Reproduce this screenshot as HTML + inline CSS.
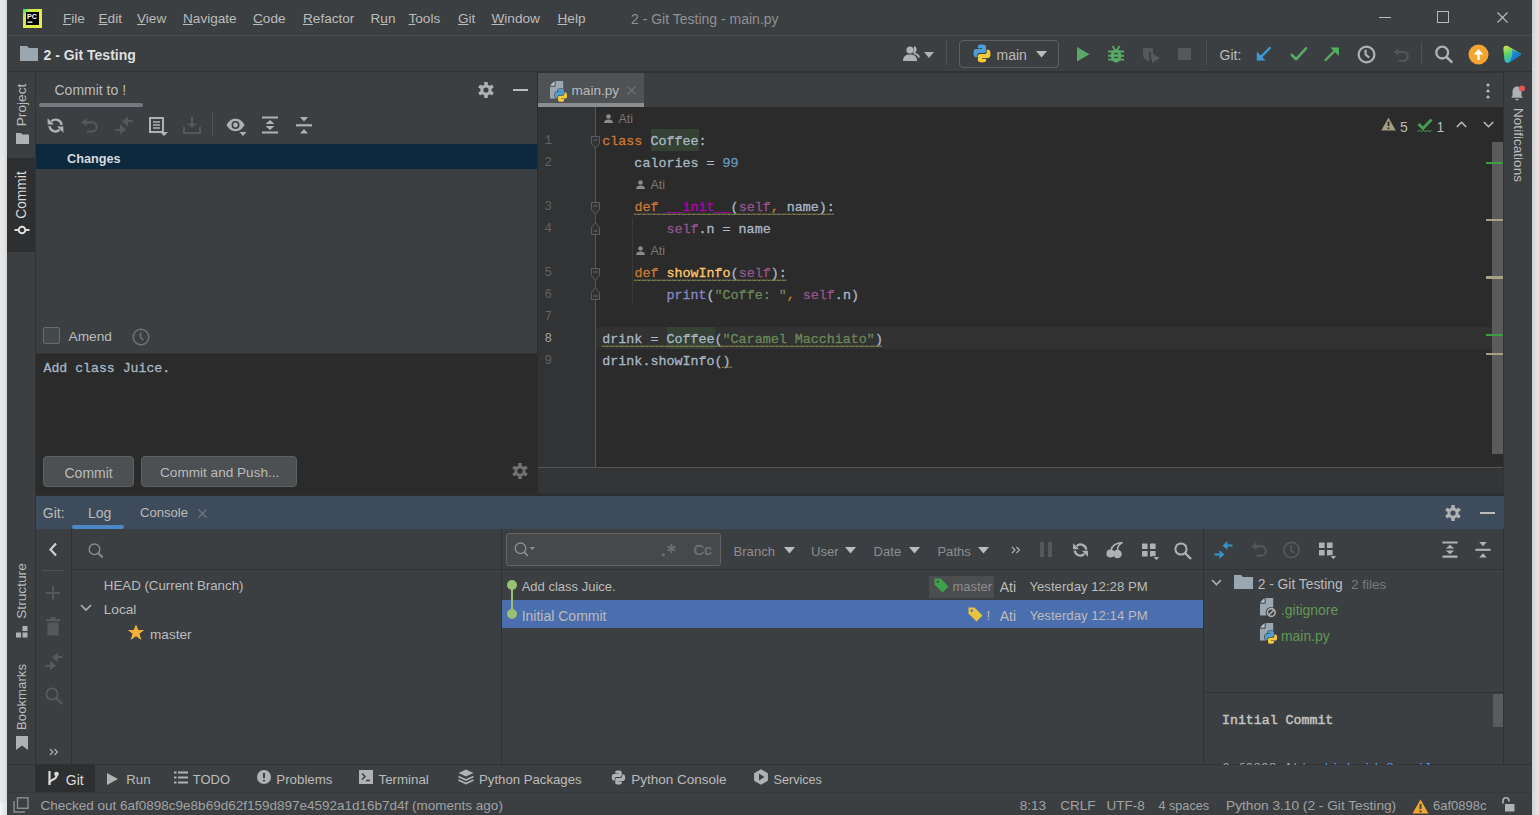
<!DOCTYPE html>
<html><head><meta charset="utf-8">
<style>
*{margin:0;padding:0;box-sizing:border-box}
html,body{width:1539px;height:815px;overflow:hidden;background:#e6e6e6;font-family:"Liberation Sans",sans-serif;font-size:13px;color:#bbbbbb}
.a{position:absolute}
.t{position:absolute;white-space:nowrap;line-height:16px}
.m{font-family:"Liberation Mono",monospace}
#code{-webkit-text-stroke:0.3px currentColor}
svg{position:absolute;overflow:visible}
</style></head><body>
<!-- light edges -->
<div class="a" style="left:0;top:0;width:7px;height:815px;background:linear-gradient(90deg,#e9e9e9 0%,#e3e3e3 70%,#d2d2d2 100%)"></div>
<div class="a" style="left:0;top:803px;width:7px;height:12px;background:linear-gradient(90deg,#f4f4f4,#e0e0e0)"></div>
<div class="a" style="left:1532px;top:0;width:7px;height:815px;background:linear-gradient(90deg,#d4d4d4,#e8e8e8)"></div>

<!-- window -->
<div class="a" id="win" style="left:7px;top:0;width:1525px;height:815px;background:#3c3f41"></div>

<!-- title bar -->
<div class="a" style="left:7px;top:35px;width:1525px;height:1px;background:#4a4d4f"></div>
<!-- toolbar bottom -->
<div class="a" style="left:7px;top:71px;width:1525px;height:1px;background:#323232"></div>

<!-- left stripe -->
<div class="a" style="left:35px;top:72px;width:1px;height:692px;background:#323232"></div>
<!-- right stripe -->
<div class="a" style="left:1503px;top:72px;width:1px;height:692px;background:#323232"></div>

<!-- commit panel right border -->
<div class="a" style="left:537px;top:72px;width:1px;height:423px;background:#2b2b2b"></div>

<!-- editor -->
<div class="a" id="editor" style="left:538px;top:107px;width:965px;height:360px;background:#2b2b2b"></div>
<div class="a" style="left:538px;top:107px;width:57px;height:360px;background:#313335"></div>
<div class="a" style="left:595px;top:107px;width:1px;height:360px;background:#555555"></div>
<div class="a" style="left:538px;top:467px;width:965px;height:1px;background:#555555"></div>

<!-- commit message area -->
<div class="a" style="left:36px;top:353px;width:501px;height:140px;background:#2b2b2b;border-top:1px solid #323232"></div>

<!-- git header -->
<div class="a" style="left:538px;top:468px;width:965px;height:27px;background:#333537"></div>
<div class="a" style="left:36px;top:493px;width:1468px;height:3px;background:#2d2e30"></div>
<div class="a" style="left:36px;top:496px;width:1468px;height:33px;background:#3e4b5a"></div>

<!-- bottom stripe and status -->
<div class="a" style="left:7px;top:764px;width:1525px;height:1px;background:#323232"></div>
<div class="a" style="left:7px;top:792px;width:1525px;height:1px;background:#37393b"></div>


<!-- ===== TITLE BAR ===== -->
<svg style="left:23px;top:9px" width="19" height="19" viewBox="0 0 19 19">
 <defs><linearGradient id="pcg" x1="0" y1="0" x2="1" y2="1"><stop offset="0" stop-color="#21d789"/><stop offset="0.22" stop-color="#c9ea4a"/><stop offset="1" stop-color="#f0f04a"/></linearGradient></defs>
 <rect x="0" y="0" width="19" height="19" fill="url(#pcg)"/>
 <rect x="3" y="3" width="13" height="13" fill="#000"/>
 <text x="4" y="10" font-family="Liberation Sans" font-weight="bold" font-size="7" fill="#fff">PC</text>
 <rect x="4.5" y="12.5" width="5" height="1.3" fill="#fff"/>
</svg>
<div class="t" id="menu" style="top:11px;font-size:13.6px;color:#bbbbbb">
 <span class="t" style="left:63px"><u>F</u>ile</span>
 <span class="t" style="left:98.5px"><u>E</u>dit</span>
 <span class="t" style="left:137px"><u>V</u>iew</span>
 <span class="t" style="left:183px"><u>N</u>avigate</span>
 <span class="t" style="left:253px"><u>C</u>ode</span>
 <span class="t" style="left:303px"><u>R</u>efactor</span>
 <span class="t" style="left:370.5px">R<u>u</u>n</span>
 <span class="t" style="left:408.5px"><u>T</u>ools</span>
 <span class="t" style="left:458px"><u>G</u>it</span>
 <span class="t" style="left:491.5px"><u>W</u>indow</span>
 <span class="t" style="left:557.5px"><u>H</u>elp</span>
 <span class="t" style="left:631px;color:#8f9193;font-size:14px">2 - Git Testing - main.py</span>
</div>
<div class="a" style="left:1379px;top:17px;width:12px;height:1px;background:#bbbbbb"></div>
<div class="a" style="left:1437px;top:11px;width:12px;height:12px;border:1px solid #bbbbbb"></div>
<svg style="left:1497px;top:12px" width="11" height="11"><path d="M0.5 0.5L10.5 10.5M10.5 0.5L0.5 10.5" stroke="#bbbbbb" stroke-width="1.1"/></svg>

<!-- ===== MAIN TOOLBAR ===== -->
<svg style="left:20px;top:46px" width="18" height="15" viewBox="0 0 18 15"><path d="M0 0H7L9 2H18V15H0Z" fill="#9aa7b0"/></svg>
<div class="t" style="left:43.5px;top:47px;font-size:14px;font-weight:bold;color:#dcdee0">2 - Git Testing</div>
<!-- users -->
<svg style="left:902px;top:45px" width="20" height="17" viewBox="0 0 20 17">
 <circle cx="8" cy="5" r="3.6" fill="#afb1b3"/><path d="M1 16C1 11 4 9.5 8 9.5C12 9.5 15 11 15 16Z" fill="#afb1b3"/>
 <path d="M12 1.2C13.6 1.2 14.6 2.6 14.6 4.2C14.6 6 13.7 7.4 12.8 7.9C15.6 8.5 18 10 18 12.5L16 12.5C15.5 10.6 13.5 9.5 11.5 9.3Z" fill="#afb1b3"/>
</svg>
<svg style="left:924px;top:52px" width="10" height="6"><path d="M0 0H10L5 6Z" fill="#afb1b3"/></svg>
<div class="a" style="left:946px;top:40px;width:1px;height:25px;background:#515151"></div>
<div class="a" style="left:959px;top:40px;width:100px;height:28px;border:1px solid #5e6060;border-radius:4px"></div>
<svg style="left:973px;top:44px" width="18" height="19" viewBox="0 0 18 19">
 <path d="M8.8 0.5C4.5 0.5 4.9 2.4 4.9 2.4V4.3H9V5H3.2C3.2 5 0.5 4.7 0.5 9.1C0.5 13.5 2.9 13.3 2.9 13.3H4.3V11.3C4.3 11.3 4.2 8.9 6.7 8.9H10.8C10.8 8.9 13.1 8.9 13.1 6.7V2.9C13.1 2.9 13.5 0.5 8.8 0.5Z" fill="#4e9fd6"/>
 <path d="M9.2 18.5C13.5 18.5 13.1 16.6 13.1 16.6V14.7H9V14H14.8C14.8 14 17.5 14.3 17.5 9.9C17.5 5.5 15.1 5.7 15.1 5.7H13.7V7.7C13.7 7.7 13.8 10.1 11.3 10.1H7.2C7.2 10.1 4.9 10.1 4.9 12.3V16.1C4.9 16.1 4.5 18.5 9.2 18.5Z" fill="#f3c93b"/>
</svg>
<div class="t" style="left:996.5px;top:47px;font-size:14px;color:#bbbbbb">main</div>
<svg style="left:1036px;top:51px" width="11" height="7"><path d="M0 0H11L5.5 6.5Z" fill="#bbbbbb"/></svg>
<svg style="left:1077px;top:47px" width="13" height="15"><path d="M0 0L12.5 7.2L0 14.5Z" fill="#59a869"/></svg>
<svg style="left:1107px;top:45px" width="18" height="18" viewBox="0 0 18 18">
 <path d="M5.5 1L7.8 4.5M12.7 1L10.4 4.5" stroke="#59a869" stroke-width="1.8"/>
 <ellipse cx="9.1" cy="10.8" rx="5.3" ry="6.7" fill="#59a869"/>
 <path d="M1.2 6.5H6M12.2 6.5H17M1.2 10.8H6M12.2 10.8H17M1.2 14.6H6M12.2 14.6H17" stroke="#59a869" stroke-width="1.9"/>
 <path d="M7 8.6H11.2M7 12.4H11.2" stroke="#2f5a35" stroke-width="1.5"/>
</svg>
<svg style="left:1142px;top:47px" width="19" height="16" viewBox="0 0 19 16">
 <path d="M1 1H11V8C11 11 8.5 13 6 14C3.5 13 1 11 1 8Z" fill="#56595b"/>
 <path d="M8 5V12" stroke="#3c3f41" stroke-width="2"/>
 <path d="M10 6L18 11L10 16Z" fill="#56595b"/>
</svg>
<div class="a" style="left:1178px;top:48px;width:13px;height:12px;background:#56595b"></div>
<div class="a" style="left:1206px;top:41px;width:1px;height:24px;background:#515151"></div>
<div class="t" style="left:1219.5px;top:47px;font-size:14px;color:#bbbbbb">Git:</div>
<svg style="left:1250px;top:40px" width="30" height="28" viewBox="0 0 30 28"><path d="M19.8 8L10 17.8" stroke="#3d9ad6" stroke-width="2.4" stroke-linecap="round"/><path d="M6.8 11.6V20.4H15.5Z" fill="#3d9ad6"/></svg>
<svg style="left:1280px;top:40px" width="30" height="28" viewBox="0 0 30 28"><path d="M11.8 15L16.2 19.2L26 8.3" stroke="#59a869" stroke-width="2.6" stroke-linecap="round" stroke-linejoin="round" fill="none"/></svg>
<svg style="left:1320px;top:40px" width="30" height="28" viewBox="0 0 30 28"><path d="M5.6 20L14.5 11.1" stroke="#59a869" stroke-width="2.4" stroke-linecap="round"/><path d="M10.4 7.5H18.9V16Z" fill="#4fb25c"/></svg>
<svg style="left:1357px;top:45px" width="19" height="19" viewBox="0 0 19 19"><circle cx="9.5" cy="9.5" r="7.9" stroke="#afb1b3" stroke-width="2.2" fill="none"/><path d="M8.6 4.8V9.6L12.2 12.6" stroke="#afb1b3" stroke-width="2.2" fill="none"/></svg>
<svg style="left:1392.5px;top:47.5px" width="16" height="14" viewBox="0 0 17 15" preserveAspectRatio="none"><path d="M0.3 4.25L5.8 0.3V8.2Z" fill="#54575a"/><path d="M5 4.25H11A4.7 4.7 0 0 1 11 13.65H5.8" stroke="#54575a" stroke-width="2.3" fill="none"/></svg>
<div class="a" style="left:1421px;top:42px;width:1px;height:22px;background:#515151"></div>
<svg style="left:1435px;top:45px" width="19" height="19" viewBox="0 0 19 19"><circle cx="7.2" cy="7.6" r="5.9" stroke="#afb1b3" stroke-width="2.3" fill="none"/><path d="M11.5 12L17.3 17.6" stroke="#afb1b3" stroke-width="2.6"/></svg>
<svg style="left:1468px;top:44px" width="21" height="21" viewBox="0 0 21 21"><circle cx="10.5" cy="10.5" r="10" fill="#f4a52f"/><path d="M10.5 9.5V16" stroke="#fff" stroke-width="2.4"/><path d="M5.8 10.5L10.5 5L15.2 10.5Z" fill="#fff"/></svg>
<svg style="left:1503px;top:45px" width="18" height="19" viewBox="0 0 18 19">
 <defs><linearGradient id="cwm" x1="0" y1="0" x2="0.3" y2="1"><stop offset="0" stop-color="#d6e84a"/><stop offset="0.5" stop-color="#5cd36a"/><stop offset="1" stop-color="#1fb7d6"/></linearGradient>
 <linearGradient id="cwm2" x1="0" y1="0" x2="1" y2="1"><stop offset="0" stop-color="#1e9be0"/><stop offset="1" stop-color="#1560c8"/></linearGradient></defs>
 <path d="M3 0.8C1.2 0.8 0.2 2.3 0.4 4.2L1.4 14.8C1.7 17.6 4.2 18.8 6.4 17.3L16.8 10.6C18 9.8 18 8.6 16.8 7.9L5.2 1.3C4.5 0.9 3.7 0.8 3 0.8Z" fill="url(#cwm)"/>
 <path d="M9 5L16.8 7.9C18 8.6 18 9.8 16.8 10.6L6.4 17.3C8.5 14 9.8 9.5 9 5Z" fill="url(#cwm2)"/>
</svg>


<!-- ===== LEFT STRIPE ===== -->
<div class="a" style="left:7px;top:158px;width:28px;height:94px;background:#2d2f30"></div>
<div class="t" style="left:22px;top:105px;transform:translate(-50%,-50%) rotate(-90deg);font-size:13.7px;color:#bbbbbb">Project</div>
<svg style="left:16px;top:133px" width="13" height="11" viewBox="0 0 13 11"><path d="M0 0H5L6.5 1.5H13V11H0Z" fill="#afb1b3"/></svg>
<div class="t" style="left:22px;top:195px;transform:translate(-50%,-50%) rotate(-90deg);font-size:13.8px;color:#dcdcdc">Commit</div>
<svg style="left:14px;top:224px" width="16" height="12" viewBox="0 0 16 12"><circle cx="8" cy="6" r="3.3" stroke="#dcdcdc" stroke-width="2" fill="none"/><path d="M0.5 6H4.5M11.5 6H15.5" stroke="#dcdcdc" stroke-width="2"/></svg>
<div class="t" style="left:22px;top:591px;transform:translate(-50%,-50%) rotate(-90deg);font-size:13.7px;color:#bbbbbb">Structure</div>
<svg style="left:16px;top:626px" width="12" height="12" viewBox="0 0 12 12"><rect x="6.5" y="0" width="5" height="5" fill="#afb1b3"/><rect x="0" y="6.5" width="5" height="5" fill="#afb1b3"/><rect x="6.5" y="6.5" width="5" height="5" fill="#afb1b3"/></svg>
<div class="t" style="left:22px;top:697px;transform:translate(-50%,-50%) rotate(-90deg);font-size:13.2px;color:#bbbbbb">Bookmarks</div>
<svg style="left:16px;top:736px" width="12" height="14" viewBox="0 0 12 14"><path d="M0 0H12V14L6 9.5L0 14Z" fill="#afb1b3"/></svg>

<!-- ===== COMMIT PANEL ===== -->
<div class="t" style="left:54.5px;top:82px;font-size:14px;color:#bbbbbb">Commit to !</div>
<div class="a" style="left:39px;top:103px;width:104px;height:4px;background:#747a80;border-radius:2px"></div>
<svg style="left:478px;top:82px" width="16" height="16" viewBox="-8 -8 16 16">
 <g fill="#afb1b3"><circle r="5.6"/>
 <rect x="-1.8" y="-8" width="3.6" height="16" rx="0.6"/>
 <rect x="-1.8" y="-8" width="3.6" height="16" rx="0.6" transform="rotate(60)"/>
 <rect x="-1.8" y="-8" width="3.6" height="16" rx="0.6" transform="rotate(120)"/></g>
 <circle r="2.6" fill="#3c3f41"/>
</svg>
<div class="a" style="left:513px;top:89px;width:15px;height:2px;background:#bbbbbb"></div>

<!-- commit toolbar -->
<svg style="left:47px;top:117px" width="17" height="17" viewBox="0 0 17 17">
 <path d="M14.6 8A6 6 0 0 0 4.4 4.4" stroke="#afb1b3" stroke-width="2.4" fill="none"/>
 <path d="M0.6 1.2V7.6H7Z" fill="#afb1b3"/>
 <path d="M2.4 9.2A6 6 0 0 0 12.6 12.6" stroke="#afb1b3" stroke-width="2.4" fill="none"/>
 <path d="M16.4 15.8V9.4H10Z" fill="#afb1b3"/>
</svg>
<svg style="left:81.3px;top:117.7px" width="17" height="15" viewBox="0 0 17 15" preserveAspectRatio="none"><path d="M0.3 4.25L5.8 0.3V8.2Z" fill="#54575a"/><path d="M5 4.25H11A4.7 4.7 0 0 1 11 13.65H5.8" stroke="#54575a" stroke-width="2.3" fill="none"/></svg>
<svg style="left:115px;top:117px" width="18" height="17" viewBox="0 0 18 17">
 <path d="M17.5 4H11" stroke="#56595b" stroke-width="2"/><path d="M7 4.5L13 -0.5V9.5Z" fill="#56595b"/>
 <path d="M0.5 13H7" stroke="#56595b" stroke-width="2"/><path d="M11 12.5L5 7.5V17.5Z" fill="#56595b"/>
</svg>
<svg style="left:149px;top:117px" width="20" height="20" viewBox="0 0 20 20">
 <rect x="1" y="1" width="13" height="14" stroke="#afb1b3" stroke-width="2" fill="none"/>
 <path d="M4 5H11M4 8H11M4 11H11" stroke="#afb1b3" stroke-width="1.6"/>
 <path d="M11 15H19L15 19Z" fill="#afb1b3"/>
</svg>
<svg style="left:183px;top:117px" width="18" height="17" viewBox="0 0 18 17">
 <path d="M9 0V9" stroke="#56595b" stroke-width="2"/><path d="M4.5 6.5H13.5L9 11Z" fill="#56595b"/>
 <path d="M1 10V16H17V10" stroke="#56595b" stroke-width="2" fill="none"/>
</svg>
<div class="a" style="left:212px;top:112px;width:1px;height:24px;background:#515151"></div>
<svg style="left:226px;top:118px" width="21" height="18" viewBox="0 0 21 18">
 <path d="M0.5 7C3 2.5 6 0.8 9.5 0.8C13 0.8 16 2.5 18.5 7C16 11.5 13 13.2 9.5 13.2C6 13.2 3 11.5 0.5 7Z" fill="#afb1b3"/>
 <circle cx="9.5" cy="7" r="4" fill="#3c3f41"/><circle cx="9.5" cy="7" r="2.4" fill="#afb1b3"/>
 <path d="M13.5 14H20.5L17 18Z" fill="#afb1b3"/>
</svg>
<svg style="left:262px;top:116px" width="16" height="19" viewBox="0 0 16 19">
 <path d="M0 1.5H16M0 16.5H16" stroke="#afb1b3" stroke-width="2.2"/>
 <path d="M3.5 8H12.5L8 4Z" fill="#afb1b3"/><path d="M3.5 10H12.5L8 14Z" fill="#afb1b3"/>
</svg>
<svg style="left:296px;top:116px" width="16" height="19" viewBox="0 0 16 19">
 <path d="M0 9.3H16" stroke="#afb1b3" stroke-width="2.2"/>
 <path d="M4 1H12L8 5.5Z" fill="#afb1b3"/><path d="M4 17.5H12L8 13Z" fill="#afb1b3"/>
</svg>

<div class="a" style="left:36px;top:144px;width:501px;height:25px;background:#0d293e"></div>
<div class="t" style="left:67px;top:150.5px;font-size:12.7px;font-weight:bold;color:#d6d9dd">Changes</div>

<div class="a" style="left:43px;top:327px;width:17px;height:17px;border:1px solid #6b6b6b;border-radius:2px;background:#43494a"></div>
<div class="t" style="left:68.5px;top:328.5px;font-size:13.7px;color:#bbbbbb">Amend</div>
<svg style="left:132px;top:328px" width="18" height="18" viewBox="0 0 18 18"><circle cx="9" cy="9" r="7.8" stroke="#6f7173" stroke-width="1.6" fill="none"/><path d="M8.5 4.5V9.5L11.5 12" stroke="#6f7173" stroke-width="1.6" fill="none"/></svg>

<div class="t m" style="left:43.5px;top:361px;font-size:13.2px;color:#a9b7c6;-webkit-text-stroke:0.3px #a9b7c6">Add class Juice.</div>
<div class="a" style="left:43px;top:456px;width:91px;height:31px;background:#4c5052;border:1px solid #5e6060;border-radius:4px"></div>
<div class="t" style="left:64.5px;top:464.5px;font-size:14px;color:#bbbbbb">Commit</div>
<div class="a" style="left:141px;top:456px;width:156px;height:31px;background:#4c5052;border:1px solid #5e6060;border-radius:4px"></div>
<div class="t" style="left:160px;top:464.5px;font-size:13.6px;color:#bbbbbb">Commit and Push...</div>
<svg style="left:512px;top:463px" width="16" height="16" viewBox="-8 -8 16 16">
 <g fill="#6f7173"><circle r="5.6"/>
 <rect x="-1.8" y="-8" width="3.6" height="16" rx="0.6"/>
 <rect x="-1.8" y="-8" width="3.6" height="16" rx="0.6" transform="rotate(60)"/>
 <rect x="-1.8" y="-8" width="3.6" height="16" rx="0.6" transform="rotate(120)"/></g>
 <circle r="2.6" fill="#2b2b2b"/>
</svg>


<!-- ===== EDITOR TABS ===== -->
<div class="a" style="left:538px;top:72px;width:965px;height:1px;background:#323232"></div>
<div class="a" style="left:538px;top:73px;width:106px;height:34px;background:#4e5254"></div>
<div class="a" style="left:538px;top:103px;width:106px;height:4px;background:#8a8e91"></div>
<svg style="left:550px;top:81px" width="20" height="21" viewBox="0 0 20 21"><path d="M5.5 0H13.2V17.5H0V5.5Z" fill="#9aa7b0"/><path d="M0 4.6L4.6 0V4.6Z" fill="#b9c2c8"/><path d="M0 5.2H5.2V0" stroke="#4e5254" stroke-width="0.9" fill="none"/><g transform="translate(4.5,7.5) scale(0.72)"><path d="M8.8 0.5C4.5 0.5 4.9 2.4 4.9 2.4V4.3H9V5H3.2C3.2 5 0.5 4.7 0.5 9.1C0.5 13.5 2.9 13.3 2.9 13.3H4.3V11.3C4.3 11.3 4.2 8.9 6.7 8.9H10.8C10.8 8.9 13.1 8.9 13.1 6.7V2.9C13.1 2.9 13.5 0.5 8.8 0.5Z" fill="#4e5254" stroke="#4e5254" stroke-width="2"/><path d="M9.2 18.5C13.5 18.5 13.1 16.6 13.1 16.6V14.7H9V14H14.8C14.8 14 17.5 14.3 17.5 9.9C17.5 5.5 15.1 5.7 15.1 5.7H13.7V7.7C13.7 7.7 13.8 10.1 11.3 10.1H7.2C7.2 10.1 4.9 10.1 4.9 12.3V16.1C4.9 16.1 4.5 18.5 9.2 18.5Z" fill="#4e5254" stroke="#4e5254" stroke-width="2"/><path d="M8.8 0.5C4.5 0.5 4.9 2.4 4.9 2.4V4.3H9V5H3.2C3.2 5 0.5 4.7 0.5 9.1C0.5 13.5 2.9 13.3 2.9 13.3H4.3V11.3C4.3 11.3 4.2 8.9 6.7 8.9H10.8C10.8 8.9 13.1 8.9 13.1 6.7V2.9C13.1 2.9 13.5 0.5 8.8 0.5Z" fill="#4e9fd6"/><path d="M9.2 18.5C13.5 18.5 13.1 16.6 13.1 16.6V14.7H9V14H14.8C14.8 14 17.5 14.3 17.5 9.9C17.5 5.5 15.1 5.7 15.1 5.7H13.7V7.7C13.7 7.7 13.8 10.1 11.3 10.1H7.2C7.2 10.1 4.9 10.1 4.9 12.3V16.1C4.9 16.1 4.5 18.5 9.2 18.5Z" fill="#f3c93b"/></g></svg>
<div class="t" style="left:571.5px;top:83px;font-size:13.6px;color:#bbbbbb">main.py</div>
<svg style="left:627px;top:86px" width="9" height="9"><path d="M0.5 0.5L8.5 8.5M8.5 0.5L0.5 8.5" stroke="#6e7072" stroke-width="1.2"/></svg>
<svg style="left:1486px;top:83px" width="4" height="16"><circle cx="2" cy="2" r="1.6" fill="#bbbbbb"/><circle cx="2" cy="8" r="1.6" fill="#bbbbbb"/><circle cx="2" cy="14" r="1.6" fill="#bbbbbb"/></svg>

<!-- ===== EDITOR CONTENT ===== -->
<div class="a" style="left:596px;top:327px;width:907px;height:22px;background:#323232"></div>
<div class="a" style="left:650.5px;top:129px;width:48px;height:22px;background:#344134"></div>
<div class="a" style="left:666.5px;top:327px;width:48px;height:22px;background:#344134"></div>
<div class="m" id="lnums" style="position:absolute;left:538px;top:0;width:20px;font-size:12.5px;color:#606366;text-align:right">
 <div class="t" style="left:0;width:14px;top:133.0px;text-align:right">1</div>
 <div class="t" style="left:0;width:14px;top:155.0px;text-align:right">2</div>
 <div class="t" style="left:0;width:14px;top:199.0px;text-align:right">3</div>
 <div class="t" style="left:0;width:14px;top:221.0px;text-align:right">4</div>
 <div class="t" style="left:0;width:14px;top:265.0px;text-align:right">5</div>
 <div class="t" style="left:0;width:14px;top:287.0px;text-align:right">6</div>
 <div class="t" style="left:0;width:14px;top:309.0px;text-align:right">7</div>
 <div class="t" style="left:0;width:14px;top:331.0px;text-align:right;color:#a4a3a3">8</div>
 <div class="t" style="left:0;width:14px;top:353.0px;text-align:right">9</div>
</div>
<!-- author inlays -->
<svg style="left:604px;top:114px" width="9" height="9" viewBox="0 0 9 9"><circle cx="4.5" cy="2.5" r="2.3" fill="#8c8c8c"/><path d="M0 9C0 6.3 2 5.4 4.5 5.4C7 5.4 9 6.3 9 9Z" fill="#8c8c8c"/></svg>
<div class="t" style="left:618.5px;top:111px;font-size:12.5px;color:#787878">Ati</div>
<svg style="left:636px;top:180px" width="9" height="9" viewBox="0 0 9 9"><circle cx="4.5" cy="2.5" r="2.3" fill="#8c8c8c"/><path d="M0 9C0 6.3 2 5.4 4.5 5.4C7 5.4 9 6.3 9 9Z" fill="#8c8c8c"/></svg>
<div class="t" style="left:650.5px;top:177px;font-size:12.5px;color:#787878">Ati</div>
<svg style="left:636px;top:246px" width="9" height="9" viewBox="0 0 9 9"><circle cx="4.5" cy="2.5" r="2.3" fill="#8c8c8c"/><path d="M0 9C0 6.3 2 5.4 4.5 5.4C7 5.4 9 6.3 9 9Z" fill="#8c8c8c"/></svg>
<div class="t" style="left:650.5px;top:243px;font-size:12.5px;color:#787878">Ati</div>

<div id="code" class="m" style="position:absolute;left:602.3px;top:0;white-space:pre;font-size:13.36px;color:#a9b7c6">
 <div class="t" style="white-space:pre;left:0;top:133.5px"><span style="color:#cc7832">class</span> Coffee:</div>
 <div class="t" style="white-space:pre;left:0;top:155.5px">    calories = <span style="color:#6897bb">99</span></div>
 <div class="t" style="white-space:pre;left:0;top:199.5px">    <span style="color:#cc7832">def</span> <span style="color:#b200b2">__init__</span>(<span style="color:#94558d">self</span><span style="color:#cc7832">,</span> name):</div>
 <div class="t" style="white-space:pre;left:0;top:221.5px">        <span style="color:#94558d">self</span>.n = name</div>
 <div class="t" style="white-space:pre;left:0;top:265.5px">    <span style="color:#cc7832">def</span> <span style="color:#ffc66d">showInfo</span>(<span style="color:#94558d">self</span>):</div>
 <div class="t" style="white-space:pre;left:0;top:287.5px">        <span style="color:#8888c6">print</span>(<span style="color:#6a8759">"Coffe: "</span><span style="color:#cc7832">,</span> <span style="color:#94558d">self</span>.n)</div>
 <div class="t" style="white-space:pre;left:0;top:331.5px">drink = Coffee(<span style="color:#6a8759">"Caramel Macchiato"</span>)</div>
 <div class="t" style="white-space:pre;left:0;top:353.5px">drink.showInfo()</div>
</div>


<!-- wavy underlines & folds -->
<svg style="left:634.0px;top:212.5px" width="200" height="3" viewBox="0 0 200 3"><path d="M0 2 L1.2 0.6 L2.5 2 L3.8 0.6 L5.0 2 L6.2 0.6 L7.5 2 L8.8 0.6 L10.0 2 L11.2 0.6 L12.5 2 L13.8 0.6 L15.0 2 L16.2 0.6 L17.5 2 L18.8 0.6 L20.0 2 L21.2 0.6 L22.5 2 L23.8 0.6 L25.0 2 L26.2 0.6 L27.5 2 L28.8 0.6 L30.0 2 L31.2 0.6 L32.5 2 L33.8 0.6 L35.0 2 L36.2 0.6 L37.5 2 L38.8 0.6 L40.0 2 L41.2 0.6 L42.5 2 L43.8 0.6 L45.0 2 L46.2 0.6 L47.5 2 L48.8 0.6 L50.0 2 L51.2 0.6 L52.5 2 L53.8 0.6 L55.0 2 L56.2 0.6 L57.5 2 L58.8 0.6 L60.0 2 L61.2 0.6 L62.5 2 L63.8 0.6 L65.0 2 L66.2 0.6 L67.5 2 L68.8 0.6 L70.0 2 L71.2 0.6 L72.5 2 L73.8 0.6 L75.0 2 L76.2 0.6 L77.5 2 L78.8 0.6 L80.0 2 L81.2 0.6 L82.5 2 L83.8 0.6 L85.0 2 L86.2 0.6 L87.5 2 L88.8 0.6 L90.0 2 L91.2 0.6 L92.5 2 L93.8 0.6 L95.0 2 L96.2 0.6 L97.5 2 L98.8 0.6 L100.0 2 L101.2 0.6 L102.5 2 L103.8 0.6 L105.0 2 L106.2 0.6 L107.5 2 L108.8 0.6 L110.0 2 L111.2 0.6 L112.5 2 L113.8 0.6 L115.0 2 L116.2 0.6 L117.5 2 L118.8 0.6 L120.0 2 L121.2 0.6 L122.5 2 L123.8 0.6 L125.0 2 L126.2 0.6 L127.5 2 L128.8 0.6 L130.0 2 L131.2 0.6 L132.5 2 L133.8 0.6 L135.0 2 L136.2 0.6 L137.5 2 L138.8 0.6 L140.0 2 L141.2 0.6 L142.5 2 L143.8 0.6 L145.0 2 L146.2 0.6 L147.5 2 L148.8 0.6 L150.0 2 L151.2 0.6 L152.5 2 L153.8 0.6 L155.0 2 L156.2 0.6 L157.5 2 L158.8 0.6 L160.0 2 L161.2 0.6 L162.5 2 L163.8 0.6 L165.0 2 L166.2 0.6 L167.5 2 L168.8 0.6 L170.0 2 L171.2 0.6 L172.5 2 L173.8 0.6 L175.0 2 L176.2 0.6 L177.5 2 L178.8 0.6 L180.0 2 L181.2 0.6 L182.5 2 L183.8 0.6 L185.0 2 L186.2 0.6 L187.5 2 L188.8 0.6 L190.0 2 L191.2 0.6 L192.5 2 L193.8 0.6 L195.0 2 L196.2 0.6 L197.5 2 L198.8 0.6 L200.0 2" stroke="#8b8654" stroke-width="1" fill="none"/></svg>
<svg style="left:634.0px;top:278.5px" width="152" height="3" viewBox="0 0 152 3"><path d="M0 2 L1.2 0.6 L2.5 2 L3.8 0.6 L5.0 2 L6.2 0.6 L7.5 2 L8.8 0.6 L10.0 2 L11.2 0.6 L12.5 2 L13.8 0.6 L15.0 2 L16.2 0.6 L17.5 2 L18.8 0.6 L20.0 2 L21.2 0.6 L22.5 2 L23.8 0.6 L25.0 2 L26.2 0.6 L27.5 2 L28.8 0.6 L30.0 2 L31.2 0.6 L32.5 2 L33.8 0.6 L35.0 2 L36.2 0.6 L37.5 2 L38.8 0.6 L40.0 2 L41.2 0.6 L42.5 2 L43.8 0.6 L45.0 2 L46.2 0.6 L47.5 2 L48.8 0.6 L50.0 2 L51.2 0.6 L52.5 2 L53.8 0.6 L55.0 2 L56.2 0.6 L57.5 2 L58.8 0.6 L60.0 2 L61.2 0.6 L62.5 2 L63.8 0.6 L65.0 2 L66.2 0.6 L67.5 2 L68.8 0.6 L70.0 2 L71.2 0.6 L72.5 2 L73.8 0.6 L75.0 2 L76.2 0.6 L77.5 2 L78.8 0.6 L80.0 2 L81.2 0.6 L82.5 2 L83.8 0.6 L85.0 2 L86.2 0.6 L87.5 2 L88.8 0.6 L90.0 2 L91.2 0.6 L92.5 2 L93.8 0.6 L95.0 2 L96.2 0.6 L97.5 2 L98.8 0.6 L100.0 2 L101.2 0.6 L102.5 2 L103.8 0.6 L105.0 2 L106.2 0.6 L107.5 2 L108.8 0.6 L110.0 2 L111.2 0.6 L112.5 2 L113.8 0.6 L115.0 2 L116.2 0.6 L117.5 2 L118.8 0.6 L120.0 2 L121.2 0.6 L122.5 2 L123.8 0.6 L125.0 2 L126.2 0.6 L127.5 2 L128.8 0.6 L130.0 2 L131.2 0.6 L132.5 2 L133.8 0.6 L135.0 2 L136.2 0.6 L137.5 2 L138.8 0.6 L140.0 2 L141.2 0.6 L142.5 2 L143.8 0.6 L145.0 2 L146.2 0.6 L147.5 2 L148.8 0.6 L150.0 2 L151.2 0.6 L152.5 2" stroke="#8b8654" stroke-width="1" fill="none"/></svg>
<svg style="left:602.0px;top:344.5px" width="280" height="3" viewBox="0 0 280 3"><path d="M0 2 L1.2 0.6 L2.5 2 L3.8 0.6 L5.0 2 L6.2 0.6 L7.5 2 L8.8 0.6 L10.0 2 L11.2 0.6 L12.5 2 L13.8 0.6 L15.0 2 L16.2 0.6 L17.5 2 L18.8 0.6 L20.0 2 L21.2 0.6 L22.5 2 L23.8 0.6 L25.0 2 L26.2 0.6 L27.5 2 L28.8 0.6 L30.0 2 L31.2 0.6 L32.5 2 L33.8 0.6 L35.0 2 L36.2 0.6 L37.5 2 L38.8 0.6 L40.0 2 L41.2 0.6 L42.5 2 L43.8 0.6 L45.0 2 L46.2 0.6 L47.5 2 L48.8 0.6 L50.0 2 L51.2 0.6 L52.5 2 L53.8 0.6 L55.0 2 L56.2 0.6 L57.5 2 L58.8 0.6 L60.0 2 L61.2 0.6 L62.5 2 L63.8 0.6 L65.0 2 L66.2 0.6 L67.5 2 L68.8 0.6 L70.0 2 L71.2 0.6 L72.5 2 L73.8 0.6 L75.0 2 L76.2 0.6 L77.5 2 L78.8 0.6 L80.0 2 L81.2 0.6 L82.5 2 L83.8 0.6 L85.0 2 L86.2 0.6 L87.5 2 L88.8 0.6 L90.0 2 L91.2 0.6 L92.5 2 L93.8 0.6 L95.0 2 L96.2 0.6 L97.5 2 L98.8 0.6 L100.0 2 L101.2 0.6 L102.5 2 L103.8 0.6 L105.0 2 L106.2 0.6 L107.5 2 L108.8 0.6 L110.0 2 L111.2 0.6 L112.5 2 L113.8 0.6 L115.0 2 L116.2 0.6 L117.5 2 L118.8 0.6 L120.0 2 L121.2 0.6 L122.5 2 L123.8 0.6 L125.0 2 L126.2 0.6 L127.5 2 L128.8 0.6 L130.0 2 L131.2 0.6 L132.5 2 L133.8 0.6 L135.0 2 L136.2 0.6 L137.5 2 L138.8 0.6 L140.0 2 L141.2 0.6 L142.5 2 L143.8 0.6 L145.0 2 L146.2 0.6 L147.5 2 L148.8 0.6 L150.0 2 L151.2 0.6 L152.5 2 L153.8 0.6 L155.0 2 L156.2 0.6 L157.5 2 L158.8 0.6 L160.0 2 L161.2 0.6 L162.5 2 L163.8 0.6 L165.0 2 L166.2 0.6 L167.5 2 L168.8 0.6 L170.0 2 L171.2 0.6 L172.5 2 L173.8 0.6 L175.0 2 L176.2 0.6 L177.5 2 L178.8 0.6 L180.0 2 L181.2 0.6 L182.5 2 L183.8 0.6 L185.0 2 L186.2 0.6 L187.5 2 L188.8 0.6 L190.0 2 L191.2 0.6 L192.5 2 L193.8 0.6 L195.0 2 L196.2 0.6 L197.5 2 L198.8 0.6 L200.0 2 L201.2 0.6 L202.5 2 L203.8 0.6 L205.0 2 L206.2 0.6 L207.5 2 L208.8 0.6 L210.0 2 L211.2 0.6 L212.5 2 L213.8 0.6 L215.0 2 L216.2 0.6 L217.5 2 L218.8 0.6 L220.0 2 L221.2 0.6 L222.5 2 L223.8 0.6 L225.0 2 L226.2 0.6 L227.5 2 L228.8 0.6 L230.0 2 L231.2 0.6 L232.5 2 L233.8 0.6 L235.0 2 L236.2 0.6 L237.5 2 L238.8 0.6 L240.0 2 L241.2 0.6 L242.5 2 L243.8 0.6 L245.0 2 L246.2 0.6 L247.5 2 L248.8 0.6 L250.0 2 L251.2 0.6 L252.5 2 L253.8 0.6 L255.0 2 L256.2 0.6 L257.5 2 L258.8 0.6 L260.0 2 L261.2 0.6 L262.5 2 L263.8 0.6 L265.0 2 L266.2 0.6 L267.5 2 L268.8 0.6 L270.0 2 L271.2 0.6 L272.5 2 L273.8 0.6 L275.0 2 L276.2 0.6 L277.5 2 L278.8 0.6 L280.0 2" stroke="#8b8654" stroke-width="1" fill="none"/></svg>
<svg style="left:722.0px;top:366.0px" width="9" height="3" viewBox="0 0 9 3"><path d="M0 2 L1.2 0.6 L2.5 2 L3.8 0.6 L5.0 2 L6.2 0.6 L7.5 2 L8.8 0.6 L10.0 2" stroke="#8b8654" stroke-width="1" fill="none"/></svg>
<svg style="left:591px;top:136px" width="9" height="13" viewBox="0 0 9 13"><path d="M0.5 0.5H8.5V7.5L4.5 12.5L0.5 7.5Z" fill="#313335" stroke="#5a5d5f" stroke-width="1"/><path d="M2.5 4H6.5" stroke="#5a5d5f" stroke-width="1.4"/></svg>
<svg style="left:591px;top:202px" width="9" height="13" viewBox="0 0 9 13"><path d="M0.5 0.5H8.5V7.5L4.5 12.5L0.5 7.5Z" fill="#313335" stroke="#5a5d5f" stroke-width="1"/><path d="M2.5 4H6.5" stroke="#5a5d5f" stroke-width="1.4"/></svg>
<svg style="left:591px;top:222px" width="9" height="13" viewBox="0 0 9 13"><path d="M0.5 12.5H8.5V5.5L4.5 0.5L0.5 5.5Z" fill="#313335" stroke="#5a5d5f" stroke-width="1"/><path d="M2.5 9H6.5" stroke="#5a5d5f" stroke-width="1.4"/></svg>
<svg style="left:591px;top:268px" width="9" height="13" viewBox="0 0 9 13"><path d="M0.5 0.5H8.5V7.5L4.5 12.5L0.5 7.5Z" fill="#313335" stroke="#5a5d5f" stroke-width="1"/><path d="M2.5 4H6.5" stroke="#5a5d5f" stroke-width="1.4"/></svg>
<svg style="left:591px;top:287px" width="9" height="13" viewBox="0 0 9 13"><path d="M0.5 12.5H8.5V5.5L4.5 0.5L0.5 5.5Z" fill="#313335" stroke="#5a5d5f" stroke-width="1"/><path d="M2.5 9H6.5" stroke="#5a5d5f" stroke-width="1.4"/></svg>
<div class="a" style="left:632px;top:218px;width:1px;height:87px;background:#393939"></div>


<!-- ===== EDITOR RIGHT INDICATORS ===== -->
<svg style="left:1381px;top:117px" width="15" height="14" viewBox="0 0 15 14"><path d="M7.5 0.5L14.8 13.5H0.2Z" fill="#a39e83"/><path d="M7.5 4.5V9" stroke="#2b2b2b" stroke-width="1.8"/><circle cx="7.5" cy="11.2" r="1" fill="#2b2b2b"/></svg>
<div class="t" style="left:1400px;top:118.5px;font-size:14px;color:#bbbbbb">5</div>
<svg style="left:1417px;top:118px" width="16" height="16" viewBox="0 0 16 16"><path d="M1.5 6L6 10.5L14.5 1.5" stroke="#499c54" stroke-width="2.8" fill="none"/><path d="M0.5 13.5L2.5 12L4.5 14L6.5 12L8.5 14L10.5 12L12.5 14L14.5 12" stroke="#499c54" stroke-width="1" fill="none"/></svg>
<div class="t" style="left:1436.5px;top:118.5px;font-size:14px;color:#bbbbbb">1</div>
<svg style="left:1456px;top:121px" width="11" height="7"><path d="M0.8 6L5.5 1.3L10.2 6" stroke="#bbbbbb" stroke-width="1.6" fill="none"/></svg>
<svg style="left:1483px;top:121px" width="11" height="7"><path d="M0.8 1L5.5 5.7L10.2 1" stroke="#bbbbbb" stroke-width="1.6" fill="none"/></svg>
<div class="a" style="left:1492px;top:142px;width:11px;height:312px;background:#595b5d"></div>
<div class="a" style="left:1486px;top:161.5px;width:17px;height:2.5px;background:#3f9e3f"></div>
<div class="a" style="left:1486px;top:218.5px;width:17px;height:2.5px;background:#a8a283"></div>
<div class="a" style="left:1486px;top:276px;width:17px;height:2.5px;background:#a8a283"></div>
<div class="a" style="left:1486px;top:333.5px;width:17px;height:2.5px;background:#3f9e3f"></div>
<div class="a" style="left:1486px;top:352.5px;width:17px;height:2.5px;background:#a8a283"></div>

<!-- ===== RIGHT STRIPE ===== -->
<svg style="left:1509px;top:84px" width="18" height="18" viewBox="0 0 18 18"><path d="M8 2.5C5 2.5 3.5 5 3.5 8V12L2 13.8H14L12.5 12V8C12.5 5 11 2.5 8 2.5Z" fill="#afb1b3"/><rect x="6.5" y="14.8" width="3" height="1.4" fill="#afb1b3"/><circle cx="13" cy="4.5" r="3" fill="#e05555"/></svg>
<div class="t" style="left:1518px;top:145px;transform:translate(-50%,-50%) rotate(90deg);font-size:13.6px;color:#bbbbbb">Notifications</div>

<!-- ===== GIT HEADER ===== -->
<div class="t" style="left:42.8px;top:505px;font-size:14px;color:#bbbbbb">Git:</div>
<div class="t" style="left:88px;top:505px;font-size:14px;color:#bbbbbb">Log</div>
<div class="a" style="left:72px;top:525px;width:52px;height:4px;background:#4a88c7;border-radius:2px"></div>
<div class="t" style="left:140px;top:505px;font-size:13.1px;color:#bbbbbb">Console</div>
<svg style="left:198px;top:509px" width="9" height="9"><path d="M0.5 0.5L8.5 8.5M8.5 0.5L0.5 8.5" stroke="#6e7780" stroke-width="1.2"/></svg>
<svg style="left:1445px;top:505px" width="16" height="16" viewBox="-8 -8 16 16"><g fill="#afb1b3"><circle r="5.6"/><rect x="-1.8" y="-8" width="3.6" height="16" rx="0.6"/><rect x="-1.8" y="-8" width="3.6" height="16" rx="0.6" transform="rotate(60)"/><rect x="-1.8" y="-8" width="3.6" height="16" rx="0.6" transform="rotate(120)"/></g><circle r="2.6" fill="#3e4b5a"/></svg>
<div class="a" style="left:1480px;top:511.5px;width:15px;height:2.5px;background:#bbbbbb"></div>

<!-- ===== GIT LOG : branches ===== -->
<div class="a" style="left:71px;top:529px;width:1px;height:235px;background:#323232"></div>
<div class="a" style="left:501px;top:529px;width:1px;height:235px;background:#323232"></div>
<div class="a" style="left:1203px;top:529px;width:1px;height:235px;background:#323232"></div>
<div class="a" style="left:72px;top:569px;width:429px;height:1px;background:#323232"></div>
<div class="a" style="left:502px;top:569px;width:701px;height:1px;background:#323232"></div>
<div class="a" style="left:1204px;top:569px;width:300px;height:1px;background:#323232"></div>
<svg style="left:48px;top:542px" width="10" height="15"><path d="M8 1.5L2.5 7.5L8 13.5" stroke="#cfd1d3" stroke-width="2.2" fill="none"/></svg>
<div class="a" style="left:42px;top:570px;width:22px;height:1px;background:#515151"></div>
<svg style="left:46px;top:586px" width="14" height="14"><path d="M7 0V14M0 7H14" stroke="#56595b" stroke-width="1.8"/></svg>
<svg style="left:46px;top:617px" width="14" height="19" viewBox="0 0 14 19"><rect x="0" y="2" width="14" height="2.2" fill="#56595b"/><rect x="4.5" y="0" width="5" height="2" fill="#56595b"/><path d="M1.5 5.5H12.5V18.5H1.5Z" fill="#56595b"/></svg>
<svg style="left:45px;top:653px" width="18" height="17" viewBox="0 0 18 17"><path d="M17.5 4H11" stroke="#56595b" stroke-width="2"/><path d="M7 4.5L13 -0.5V9.5Z" fill="#56595b"/><path d="M0.5 13H7" stroke="#56595b" stroke-width="2"/><path d="M11 12.5L5 7.5V17.5Z" fill="#56595b"/></svg>
<svg style="left:45px;top:687px" width="18" height="18" viewBox="0 0 18 18"><circle cx="7" cy="7" r="5.6" stroke="#56595b" stroke-width="2" fill="none"/><path d="M11 11L17 17" stroke="#56595b" stroke-width="2.4"/></svg>
<svg style="left:49px;top:748px" width="10" height="8" viewBox="0 0 10 8"><path d="M1 1L4 4L1 7M5.5 1L8.5 4L5.5 7" stroke="#afb1b3" stroke-width="1.2" fill="none"/></svg>

<svg style="left:88px;top:543px" width="16" height="15" viewBox="0 0 16 15"><circle cx="6.5" cy="6.3" r="5.3" stroke="#8c8e90" stroke-width="1.4" fill="none"/><path d="M10.2 10.2L14.8 14.5" stroke="#8c8e90" stroke-width="1.8"/></svg>
<div class="t" style="left:103.8px;top:577.5px;font-size:13.3px;color:#bbbbbb">HEAD (Current Branch)</div>
<svg style="left:80px;top:604px" width="12" height="8"><path d="M1 1L6 6L11 1" stroke="#afb1b3" stroke-width="1.6" fill="none"/></svg>
<div class="t" style="left:103.8px;top:602px;font-size:13.6px;color:#bbbbbb">Local</div>
<svg style="left:127px;top:624px" width="18" height="17" viewBox="0 0 18 17"><path d="M9 0.5L11.3 6H17.2L12.5 9.7L14.3 16L9 12.3L3.7 16L5.5 9.7L0.8 6H6.7Z" fill="#f4af3d"/></svg>
<div class="t" style="left:150px;top:627px;font-size:13.6px;color:#bbbbbb">master</div>

<!-- ===== GIT LOG : table ===== -->
<div class="a" style="left:506px;top:533px;width:215px;height:33px;background:#45494a;border:1px solid #646464;border-radius:3px"></div>
<svg style="left:514px;top:542px" width="22" height="16" viewBox="0 0 22 16"><circle cx="6.5" cy="6.3" r="5.3" stroke="#8c8e90" stroke-width="1.3" fill="none"/><path d="M10.2 10.2L14 14" stroke="#8c8e90" stroke-width="1.7"/><path d="M15.5 5H21L18.25 8Z" fill="#8c8e90"/></svg>
<svg style="left:661px;top:543px" width="16" height="14" viewBox="0 0 16 14"><rect x="1" y="10.5" width="2.6" height="2.6" fill="#6e7072"/><path d="M10.5 1V10M6.5 3.2L14.5 7.8M14.5 3.2L6.5 7.8" stroke="#6e7072" stroke-width="1.8"/></svg>
<div class="t" style="left:693.5px;top:542px;font-size:14.8px;color:#6e7072;-webkit-text-stroke:0.5px #6e7072">Cc</div>
<div class="t" style="left:733.5px;top:543.5px;font-size:13.1px;color:#8c8e90">Branch</div>
<svg style="left:784px;top:547px" width="11" height="7"><path d="M0 0H11L5.5 6.5Z" fill="#bbbbbb"/></svg>
<div class="t" style="left:811px;top:543.5px;font-size:13.1px;color:#8c8e90">User</div>
<svg style="left:845px;top:547px" width="11" height="7"><path d="M0 0H11L5.5 6.5Z" fill="#bbbbbb"/></svg>
<div class="t" style="left:873.5px;top:543.5px;font-size:13.1px;color:#8c8e90">Date</div>
<svg style="left:909px;top:547px" width="11" height="7"><path d="M0 0H11L5.5 6.5Z" fill="#bbbbbb"/></svg>
<div class="t" style="left:937.4px;top:543.5px;font-size:13.1px;color:#8c8e90">Paths</div>
<svg style="left:978px;top:547px" width="11" height="7"><path d="M0 0H11L5.5 6.5Z" fill="#bbbbbb"/></svg>
<svg style="left:1011px;top:546px" width="10" height="8" viewBox="0 0 10 8"><path d="M1 1L4 4L1 7M5.5 1L8.5 4L5.5 7" stroke="#afb1b3" stroke-width="1.2" fill="none"/></svg>
<div class="a" style="left:1040px;top:541.5px;width:3.5px;height:15px;background:#56595b"></div>
<div class="a" style="left:1048px;top:541.5px;width:3.5px;height:15px;background:#56595b"></div>
<svg style="left:1072px;top:541.5px" width="17" height="16" viewBox="0 0 17 17">
 <path d="M14.6 8A6 6 0 0 0 4.4 4.4" stroke="#afb1b3" stroke-width="2.4" fill="none"/><path d="M0.6 1.2V7.6H7Z" fill="#afb1b3"/>
 <path d="M2.4 9.2A6 6 0 0 0 12.6 12.6" stroke="#afb1b3" stroke-width="2.4" fill="none"/><path d="M16.4 15.8V9.4H10Z" fill="#afb1b3"/>
</svg>
<svg style="left:1106px;top:541px" width="18" height="18" viewBox="0 0 18 18"><circle cx="4.5" cy="12.5" r="4" fill="#afb1b3"/><circle cx="11.5" cy="13" r="4.3" fill="#afb1b3"/><path d="M5 9C6 5 9 2 16.5 1.5M11.5 9C11.5 6 13 3 16.5 1.5" stroke="#afb1b3" stroke-width="1.5" fill="none"/></svg>
<svg style="left:1142px;top:543px" width="18" height="18" viewBox="0 0 18 18"><rect x="0" y="0.5" width="5.6" height="5.6" rx="0.6" fill="#afb1b3"/><rect x="8" y="0.5" width="5.6" height="5.6" rx="0.6" fill="#afb1b3"/><rect x="0" y="8" width="5.6" height="5.6" rx="0.6" fill="#afb1b3"/><rect x="8" y="8" width="5.6" height="5.6" rx="0.6" fill="#afb1b3"/><path d="M10.5 13.6H18.2L14.35 17.6Z" fill="#afb1b3" stroke="#3c3f41" stroke-width="1"/></svg>
<svg style="left:1174px;top:542px" width="18" height="18" viewBox="0 0 18 18"><circle cx="7" cy="7" r="5.6" stroke="#afb1b3" stroke-width="2" fill="none"/><path d="M11 11L17 17" stroke="#afb1b3" stroke-width="2.4"/></svg>

<div class="a" style="left:502px;top:600px;width:701px;height:28px;background:#4b6eaf"></div>
<div class="a" style="left:510.5px;top:585px;width:2.6px;height:29px;background:#98bf73"></div>
<div class="a" style="left:507px;top:579.5px;width:10px;height:10px;border-radius:50%;background:#98bf73"></div>
<div class="a" style="left:507px;top:608.5px;width:10px;height:10px;border-radius:50%;background:#98bf73"></div>
<div class="t" style="left:521.7px;top:578.5px;font-size:13px;color:#bbbbbb">Add class Juice.</div>
<div class="t" style="left:521.7px;top:607.5px;font-size:14px;color:#bbbbbb">Initial Commit</div>
<div class="a" style="left:929px;top:575.5px;width:65px;height:22px;background:#4b4d4f"></div>
<svg style="left:934px;top:578px" width="15" height="15" viewBox="0 0 15 15"><path d="M0.5 2.5V0.5H6.5L14.5 8.5L8.5 14.5L0.5 6.5Z" fill="#3fa14a"/><circle cx="3.8" cy="3.8" r="1.2" fill="#4b4d4f"/></svg>
<div class="t" style="left:952.4px;top:578.5px;font-size:13px;color:#8c8e90">master</div>
<svg style="left:968px;top:607px" width="15" height="15" viewBox="0 0 15 15"><path d="M0.5 2.5V0.5H6.5L14.5 8.5L8.5 14.5L0.5 6.5Z" fill="#e8c340"/><circle cx="3.8" cy="3.8" r="1.2" fill="#4b6eaf"/></svg>
<div class="t" style="left:986.5px;top:607.5px;font-size:13px;color:#bbbbbb">!</div>
<div class="t" style="left:999.7px;top:578.5px;font-size:14px;color:#bbbbbb">Ati</div>
<div class="t" style="left:1029.4px;top:578.5px;font-size:13.2px;color:#bbbbbb">Yesterday 12:28 PM</div>
<div class="t" style="left:999.7px;top:607.5px;font-size:14px;color:#bbbbbb">Ati</div>
<div class="t" style="left:1029.4px;top:607.5px;font-size:13.2px;color:#bbbbbb">Yesterday 12:14 PM</div>

<!-- ===== GIT LOG : right panel ===== -->
<svg style="left:1214px;top:541px" width="19" height="18" viewBox="0 0 19 18"><path d="M18.5 4.5H12" stroke="#3592c4" stroke-width="2.2"/><path d="M8.5 4.5L13.5 0V9Z" fill="#3592c4"/><path d="M0.5 13.5H7" stroke="#3592c4" stroke-width="2.2"/><path d="M10.5 13.5L5.5 9V18Z" fill="#3592c4"/></svg>
<svg style="left:1250.5px;top:542px" width="16" height="15" viewBox="0 0 17 15" preserveAspectRatio="none"><path d="M0.3 4.25L5.8 0.3V8.2Z" fill="#54575a"/><path d="M5 4.25H11A4.7 4.7 0 0 1 11 13.65H5.8" stroke="#54575a" stroke-width="2.3" fill="none"/></svg>
<svg style="left:1282px;top:541px" width="19" height="18" viewBox="0 0 19 19"><circle cx="9.5" cy="9.5" r="8" stroke="#56595b" stroke-width="1.8" fill="none"/><path d="M9 4.5V10L12.5 12.5" stroke="#56595b" stroke-width="1.8" fill="none"/></svg>
<svg style="left:1319px;top:542px" width="18" height="18" viewBox="0 0 18 18"><rect x="0" y="0.5" width="5.6" height="5.6" rx="0.6" fill="#afb1b3"/><rect x="8" y="0.5" width="5.6" height="5.6" rx="0.6" fill="#afb1b3"/><rect x="0" y="8" width="5.6" height="5.6" rx="0.6" fill="#afb1b3"/><rect x="8" y="8" width="5.6" height="5.6" rx="0.6" fill="#afb1b3"/><path d="M10.5 13.6H18.2L14.35 17.6Z" fill="#afb1b3" stroke="#3c3f41" stroke-width="1"/></svg>
<svg style="left:1442px;top:541px" width="16" height="18" viewBox="0 0 16 19"><path d="M0 1.5H16M0 16.5H16" stroke="#afb1b3" stroke-width="2.2"/><path d="M3.5 8H12.5L8 4Z" fill="#afb1b3"/><path d="M3.5 10H12.5L8 14Z" fill="#afb1b3"/></svg>
<svg style="left:1475px;top:541px" width="16" height="18" viewBox="0 0 16 19"><path d="M0 9.3H16" stroke="#afb1b3" stroke-width="2.2"/><path d="M4 1H12L8 5.5Z" fill="#afb1b3"/><path d="M4 17.5H12L8 13Z" fill="#afb1b3"/></svg>

<svg style="left:1211px;top:579px" width="11" height="7"><path d="M1 1L5.5 5.5L10 1" stroke="#afb1b3" stroke-width="1.6" fill="none"/></svg>
<svg style="left:1234px;top:575px" width="19" height="14" viewBox="0 0 19 14"><path d="M0 0H7L9 2H19V14H0Z" fill="#9aa7b0"/></svg>
<div class="t" style="left:1257.7px;top:577px;font-size:13.8px;color:#bbbbbb">2 - Git Testing</div>
<div class="t" style="left:1350.9px;top:577px;font-size:13.5px;color:#787878">2 files</div>
<svg style="left:1260px;top:598px" width="20" height="21" viewBox="0 0 20 21"><path d="M5.5 0H13.2V17.5H0V5.5Z" fill="#9aa7b0"/><path d="M0 4.6L4.6 0V4.6Z" fill="#b9c2c8"/><path d="M0 5.2H5.2V0" stroke="#3c3f41" stroke-width="0.9" fill="none"/><circle cx="11.3" cy="14.5" r="5.6" fill="#3c3f41"/><circle cx="11.3" cy="14.5" r="3.9" stroke="#afb1b3" stroke-width="1.6" fill="none"/><path d="M8.8 17L13.8 12" stroke="#afb1b3" stroke-width="1.6"/></svg>
<div class="t" style="left:1281px;top:602px;font-size:13.9px;color:#629755">.gitignore</div>
<svg style="left:1260px;top:623px" width="20" height="21" viewBox="0 0 20 21"><path d="M5.5 0H13.2V17.5H0V5.5Z" fill="#9aa7b0"/><path d="M0 4.6L4.6 0V4.6Z" fill="#b9c2c8"/><path d="M0 5.2H5.2V0" stroke="#3c3f41" stroke-width="0.9" fill="none"/><g transform="translate(4.5,7.5) scale(0.72)"><path d="M8.8 0.5C4.5 0.5 4.9 2.4 4.9 2.4V4.3H9V5H3.2C3.2 5 0.5 4.7 0.5 9.1C0.5 13.5 2.9 13.3 2.9 13.3H4.3V11.3C4.3 11.3 4.2 8.9 6.7 8.9H10.8C10.8 8.9 13.1 8.9 13.1 6.7V2.9C13.1 2.9 13.5 0.5 8.8 0.5Z" fill="#3c3f41" stroke="#3c3f41" stroke-width="2"/><path d="M9.2 18.5C13.5 18.5 13.1 16.6 13.1 16.6V14.7H9V14H14.8C14.8 14 17.5 14.3 17.5 9.9C17.5 5.5 15.1 5.7 15.1 5.7H13.7V7.7C13.7 7.7 13.8 10.1 11.3 10.1H7.2C7.2 10.1 4.9 10.1 4.9 12.3V16.1C4.9 16.1 4.5 18.5 9.2 18.5Z" fill="#3c3f41" stroke="#3c3f41" stroke-width="2"/><path d="M8.8 0.5C4.5 0.5 4.9 2.4 4.9 2.4V4.3H9V5H3.2C3.2 5 0.5 4.7 0.5 9.1C0.5 13.5 2.9 13.3 2.9 13.3H4.3V11.3C4.3 11.3 4.2 8.9 6.7 8.9H10.8C10.8 8.9 13.1 8.9 13.1 6.7V2.9C13.1 2.9 13.5 0.5 8.8 0.5Z" fill="#4e9fd6"/><path d="M9.2 18.5C13.5 18.5 13.1 16.6 13.1 16.6V14.7H9V14H14.8C14.8 14 17.5 14.3 17.5 9.9C17.5 5.5 15.1 5.7 15.1 5.7H13.7V7.7C13.7 7.7 13.8 10.1 11.3 10.1H7.2C7.2 10.1 4.9 10.1 4.9 12.3V16.1C4.9 16.1 4.5 18.5 9.2 18.5Z" fill="#f3c93b"/></g></svg>
<div class="t" style="left:1281px;top:627.5px;font-size:13.9px;color:#629755">main.py</div>

<div class="a" style="left:1204px;top:692px;width:300px;height:1px;background:#323232"></div>
<div class="t m" style="left:1222px;top:712.5px;font-size:13.25px;color:#c4c4c4;-webkit-text-stroke:0.45px #c4c4c4">Initial Commit</div>
<div class="a" style="left:1492.5px;top:694px;width:10.5px;height:33px;background:#595b5d"></div>
<div style="position:absolute;left:1204px;top:755px;width:288px;height:10px;overflow:hidden">
 <div class="t m" style="left:18px;top:6px;font-size:13px;color:#a0a0a0">6af0898 Ati <span style="color:#589df6">ati.hajdu@gmail</span></div>
</div>

<!-- ===== BOTTOM STRIPE ===== -->
<div class="a" style="left:35px;top:765px;width:60px;height:27px;background:#2d2f30"></div>
<svg style="left:47px;top:770.4px" width="13" height="16" viewBox="0 0 13 16"><path d="M2.5 1V15" stroke="#dcdcdc" stroke-width="2.2"/><circle cx="9.5" cy="4" r="2.3" fill="#dcdcdc"/><path d="M9.5 6C9.5 10 3 9 2.5 13" stroke="#dcdcdc" stroke-width="2" fill="none"/></svg>
<div class="t" style="left:65.8px;top:771.9px;font-size:14px;color:#dcdcdc">Git</div>
<svg style="left:107px;top:772.9px" width="12" height="13"><path d="M0 0L11 6L0 12Z" fill="#afb1b3"/></svg>
<div class="t" style="left:126.3px;top:771.9px;font-size:13.2px;color:#bbbbbb">Run</div>
<svg style="left:174px;top:771.4px" width="14" height="13" viewBox="0 0 14 13"><path d="M0 1.5H2.5M0 6.5H2.5M0 11.5H2.5M4 1.5H14M4 6.5H14M4 11.5H14" stroke="#afb1b3" stroke-width="2"/></svg>
<div class="t" style="left:192.7px;top:771.9px;font-size:13px;color:#bbbbbb">TODO</div>
<svg style="left:257px;top:770.4px" width="14" height="14" viewBox="0 0 14 14"><circle cx="7" cy="7" r="7" fill="#afb1b3"/><path d="M7 3V8" stroke="#3c3f41" stroke-width="2"/><circle cx="7" cy="10.5" r="1.1" fill="#3c3f41"/></svg>
<div class="t" style="left:276.3px;top:771.9px;font-size:13.3px;color:#bbbbbb">Problems</div>
<svg style="left:359px;top:770.4px" width="14" height="14" viewBox="0 0 14 14"><rect x="0" y="0" width="14" height="14" fill="#afb1b3"/><path d="M3 3.5L6 6.5L3 9.5" stroke="#3c3f41" stroke-width="1.5" fill="none"/><path d="M7 10.5H11" stroke="#3c3f41" stroke-width="1.5"/></svg>
<div class="t" style="left:378.5px;top:771.9px;font-size:13.3px;color:#bbbbbb">Terminal</div>
<svg style="left:458px;top:768.8px" width="16" height="16" viewBox="0 0 16 16"><path d="M8 0.5L15.5 4L8 7.5L0.5 4Z" fill="#afb1b3"/><path d="M0.5 7.5L8 11L15.5 7.5M0.5 11L8 14.5L15.5 11" stroke="#afb1b3" stroke-width="1.8" fill="none"/></svg>
<div class="t" style="left:479px;top:771.9px;font-size:13.2px;color:#bbbbbb">Python Packages</div>
<svg style="left:611px;top:770.4px" width="15" height="15" viewBox="0 0 18 19"><g opacity="1"><path d="M8.8 0.5C4.5 0.5 4.9 2.4 4.9 2.4V4.3H9V5H3.2C3.2 5 0.5 4.7 0.5 9.1C0.5 13.5 2.9 13.3 2.9 13.3H4.3V11.3C4.3 11.3 4.2 8.9 6.7 8.9H10.8C10.8 8.9 13.1 8.9 13.1 6.7V2.9C13.1 2.9 13.5 0.5 8.8 0.5Z" fill="#afb1b3"/><path d="M9.2 18.5C13.5 18.5 13.1 16.6 13.1 16.6V14.7H9V14H14.8C14.8 14 17.5 14.3 17.5 9.9C17.5 5.5 15.1 5.7 15.1 5.7H13.7V7.7C13.7 7.7 13.8 10.1 11.3 10.1H7.2C7.2 10.1 4.9 10.1 4.9 12.3V16.1C4.9 16.1 4.5 18.5 9.2 18.5Z" fill="#afb1b3"/></g></svg>
<div class="t" style="left:631.3px;top:771.9px;font-size:13.5px;color:#bbbbbb">Python Console</div>
<svg style="left:753px;top:768.8px" width="16" height="16" viewBox="0 0 16 16"><path d="M8 0.3L14.9 4.2V11.8L8 15.7L1.1 11.8V4.2Z" fill="#afb1b3"/><path d="M6 4.5L11.5 8L6 11.5Z" fill="#3c3f41"/></svg>
<div class="t" style="left:773.6px;top:771.9px;font-size:12.6px;color:#bbbbbb">Services</div>

<!-- ===== STATUS BAR ===== -->
<svg style="left:13px;top:797px" width="16" height="16" viewBox="0 0 16 16"><rect x="4.5" y="0.8" width="10.5" height="10.5" stroke="#8c8e90" stroke-width="1.4" fill="none"/><path d="M1 4V15H12" stroke="#8c8e90" stroke-width="1.4" fill="none"/></svg>
<div class="t" style="left:40.5px;top:798px;font-size:13.5px;color:#a0a2a4">Checked out 6af0898c9e8b69d62f159d897e4592a1d16b7d4f (moments ago)</div>
<div class="t" style="left:1019.7px;top:798px;font-size:13.5px;color:#a0a2a4">8:13</div>
<div class="t" style="left:1060.3px;top:798px;font-size:13.5px;color:#a0a2a4">CRLF</div>
<div class="t" style="left:1106.4px;top:798px;font-size:13.5px;color:#a0a2a4">UTF-8</div>
<div class="t" style="left:1158.4px;top:798px;font-size:12.7px;color:#a0a2a4">4 spaces</div>
<div class="t" style="left:1226px;top:798px;font-size:13.7px;color:#a0a2a4">Python 3.10 (2 - Git Testing)</div>
<svg style="left:1412px;top:799px" width="17" height="15" viewBox="0 0 17 15"><path d="M8.5 0.5L16.5 14.5H0.5Z" fill="#f0a732"/><path d="M8.5 5V10" stroke="#3c3f41" stroke-width="1.9"/><circle cx="8.5" cy="12.3" r="1.1" fill="#3c3f41"/></svg>
<div class="t" style="left:1433px;top:798px;font-size:13px;color:#a0a2a4">6af0898c</div>
<svg style="left:1500px;top:797px" width="15" height="15" viewBox="0 0 15 15"><path d="M3 6.5V4C3 1.8 4.3 0.8 6 0.8C7.7 0.8 9 1.8 9 4V4.5" stroke="#afb1b3" stroke-width="1.6" fill="none"/><rect x="5" y="7" width="9.5" height="7.5" fill="#afb1b3"/></svg>

</body></html>
